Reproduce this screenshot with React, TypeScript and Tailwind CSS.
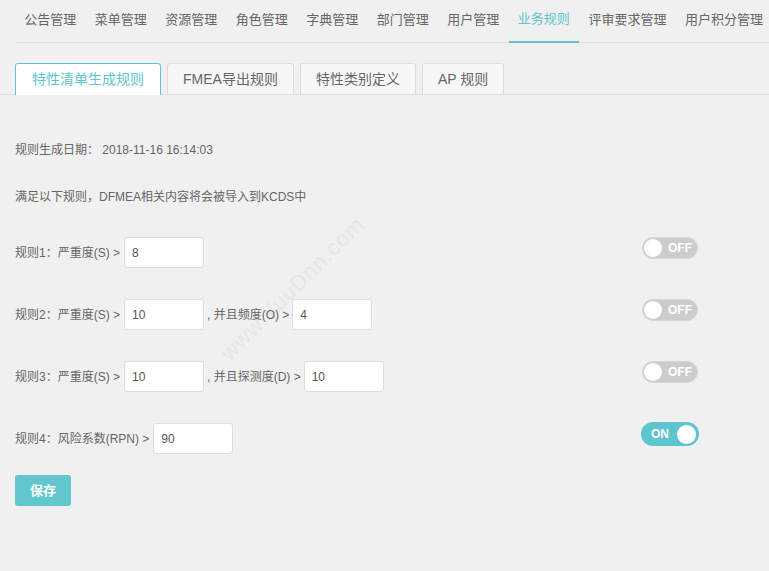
import { useState } from 'react';

const navItems = ['公告管理', '菜单管理', '资源管理', '角色管理', '字典管理', '部门管理', '用户管理', '业务规则', '评审要求管理', '用户积分管理'];
const tabs = ['特性清单生成规则', 'FMEA导出规则', '特性类别定义', 'AP 规则'];

function Toggle({ on, onClick }: { on: boolean; onClick: () => void }) {
  if (on) {
    return (
      <button
        onClick={onClick}
        className="-mr-px -mt-px flex h-[24px] w-[58px] items-center justify-between rounded-full bg-[#5ec5ce] pl-[10px] pr-[3px] text-[12px] font-semibold text-white"
      >
        ON
        <span className="h-[19px] w-[19px] rounded-full bg-white" />
      </button>
    );
  }
  return (
    <button
      onClick={onClick}
      className="flex h-[22px] w-[56px] items-center rounded-full border border-[#d6d6d6] bg-[#cccccc] pl-[1px] text-[12px] font-semibold text-white"
    >
      <span className="h-[18px] w-[18px] rounded-full bg-white" />
      <span className="ml-[6px]">OFF</span>
    </button>
  );
}

function Field({ value }: { value: string }) {
  return (
    <input
      defaultValue={value}
      className="h-[31px] w-[80px] rounded-[3px] border border-[#dddddd] bg-white px-[7px] text-[12px] text-[#555] outline-none"
    />
  );
}

export default function App() {
  const [active] = useState(0);
  const [switches, setSwitches] = useState([false, false, false, true]);
  const flip = (i: number) => setSwitches((s) => s.map((v, j) => (j === i ? !v : v)));

  const rows = [
    <>
      <span>规则1：严重度(S) &gt;</span>
      <span className="w-[4px]" />
      <Field value="8" />
    </>,
    <>
      <span>规则2：严重度(S) &gt;</span>
      <span className="w-[4px]" />
      <Field value="10" />
      <span className="ml-[3px] mr-[3px]">, 并且频度(O) &gt;</span>
      <Field value="4" />
    </>,
    <>
      <span>规则3：严重度(S) &gt;</span>
      <span className="w-[4px]" />
      <Field value="10" />
      <span className="ml-[3px] mr-[3px]">, 并且探测度(D) &gt;</span>
      <Field value="10" />
    </>,
    <>
      <span>规则4：风险系数(RPN) &gt;</span>
      <span className="w-[4px]" />
      <Field value="90" />
    </>,
  ];

  return (
    <div className="relative h-[571px] w-full overflow-hidden bg-[#f0f0f0] font-['Liberation_Sans','Noto_Sans_CJK_SC',sans-serif] text-[#666]">
      {/* watermark */}
      <span className="pointer-events-none absolute left-[196px] top-[272px] -rotate-45 select-none whitespace-nowrap text-[22px] tracking-[1px] text-[#e6e6e6]">
        www.YuuDnn.com
      </span>

      <div className="relative pl-[15px]">
        <div className="flex h-[43px] whitespace-nowrap border-b border-[#dddddd]">
          {navItems.map((n, i) => (
            <div
              key={n}
              className={
                i === 7
                  ? 'flex h-[43px] items-center border-b-2 border-[#5ec5ce] px-[9.25px] pb-[4px] text-[13px] text-[#5ec5ce]'
                  : 'flex h-[43px] items-center px-[9.25px] pb-[4px] text-[13px] text-[#666]'
              }
            >
              {n}
            </div>
          ))}
        </div>
      </div>

      <div className="relative mt-[20px] flex h-[32px] gap-[6px] border-b border-[#dddddd] pl-[15px]">
        {tabs.map((t, i) => (
          <div
            key={t}
            className={
              i === active
                ? '-mb-px flex h-[32px] items-center rounded-t-[3px] border border-b-0 border-[#5ec5ce] bg-white px-[16px] text-[14px] text-[#5ec5ce]'
                : 'flex h-[31px] items-center rounded-t-[3px] border border-b-0 border-[#dddddd] bg-[#f7f7f7] px-[15px] text-[14px] text-[#666]'
            }
          >
            {t}
          </div>
        ))}
      </div>

      <div className="relative pl-[15px] pr-[71px] text-[12px]">
        <div className="mt-[45px] leading-[20px]">规则生成日期： 2018-11-16 16:14:03</div>
        <div className="mt-[27px] leading-[20px]">满足以下规则，DFMEA相关内容将会被导入到KCDS中</div>

        <div className="mt-[30px] flex flex-col gap-[31px]">
          {rows.map((r, i) => (
            <div key={i} className="flex items-start justify-between">
              <div className="flex h-[31px] items-center">{r}</div>
              <Toggle on={switches[i]} onClick={() => flip(i)} />
            </div>
          ))}
        </div>

        <button className="mt-[21px] flex h-[31px] w-[56px] items-center justify-center rounded-[3px] bg-[#62c6cf] text-[13px] font-bold text-white">
          保存
        </button>
      </div>
    </div>
  );
}
